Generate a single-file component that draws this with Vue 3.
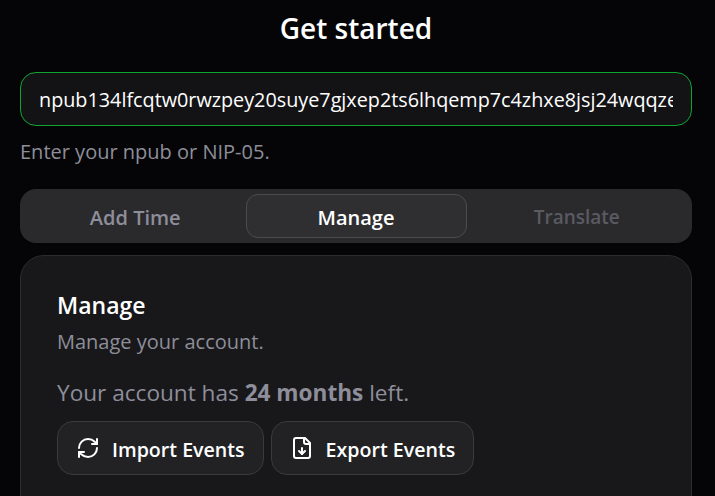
<script setup>
import { ref } from 'vue';

const pubkey = ref('npub134lfcqtw0rwzpey20suye7gjxep2ts6lhqemp7c4zhxe8jsj24wqqze');
const tabs = [
  { name: 'Add Time', state: 'idle' },
  { name: 'Manage', state: 'active' },
  { name: 'Translate', state: 'disabled' },
];
</script>

<template>
  <div class="page">
    <h1>Get started</h1>

    <input v-model="pubkey" class="npub-input" type="text">
    <p class="hint">Enter your npub or NIP-05.</p>

    <div class="tabs">
      <button v-for="tab in tabs" :key="tab.name" class="tab" :class="tab.state">{{ tab.name }}</button>
    </div>

    <div class="card">
      <h2>Manage</h2>
      <p class="desc">Manage your account.</p>
      <p class="left">Your account has <b>24 months</b> left.</p>
      <div class="actions">
        <button class="action">
          <svg viewBox="0 0 24 24" width="24" height="24" fill="none" stroke="currentColor" stroke-width="2" stroke-linecap="round" stroke-linejoin="round">
            <path d="M3 12a9 9 0 0 1 9-9 9.75 9.75 0 0 1 6.74 2.74L21 8" />
            <path d="M21 3v5h-5" />
            <path d="M21 12a9 9 0 0 1-9 9 9.75 9.75 0 0 1-6.74-2.74L3 16" />
            <path d="M8 16H3v5" />
          </svg>
          <span>Import Events</span>
        </button>
        <button class="action">
          <svg viewBox="0 0 24 24" width="24" height="24" fill="none" stroke="currentColor" stroke-width="2" stroke-linecap="round" stroke-linejoin="round">
            <path d="M15 2H6a2 2 0 0 0-2 2v16a2 2 0 0 0 2 2h12a2 2 0 0 0 2-2V7Z" />
            <path d="M14 2v4a2 2 0 0 0 2 2h4" />
            <path d="M12 18v-6" />
            <path d="m9 15 3 3 3-3" />
          </svg>
          <span>Export Events</span>
        </button>
      </div>
    </div>
  </div>
</template>

<style>
html, body {
  background: #050507;
  overflow: hidden;
}
</style>

<style scoped>
.page {
  box-sizing: border-box;
  height: 496px;
  overflow: hidden;
  padding: 0 23px 0 20px;
  font-family: "Open Sans", "Noto Sans", sans-serif;
  color: #fff;
}

h1 {
  margin: 0;
  padding-top: 8px;
  height: 72px;
  box-sizing: border-box;
  text-align: center;
  font-size: 28px;
  line-height: 40px;
  font-weight: 600;
}

.npub-input {
  display: block;
  box-sizing: border-box;
  width: 100%;
  height: 54px;
  padding: 0 18px;
  background: #131316;
  border: 1px solid #0ea52f;
  border-radius: 16px;
  outline: none;
  color: #fff;
  font-family: inherit;
  font-size: 19.8px;
}

.hint {
  margin: 12px 0 23px;
  color: #8e8e9a;
  font-size: 20px;
  line-height: 28px;
}

.tabs {
  display: grid;
  grid-template-columns: 1fr 221px 1fr;
  height: 54px;
  box-sizing: border-box;
  padding: 5px;
  background: #2a2a2d;
  border-radius: 16px;
}

.tab {
  border: 1px solid transparent;
  border-radius: 12px;
  background: none;
  font-family: inherit;
  font-size: 20px;
  font-weight: 600;
  padding: 2px 0 0;
}

.tab.idle {
  color: #8e8e9a;
}

.tab.active {
  color: #fff;
  background: #2f2f32;
  border-color: #4b4b4e;
}

.tab.disabled {
  color: #5a5a62;
  font-size: 19px;
}

.card {
  margin-top: 12px;
  height: 300px;
  box-sizing: border-box;
  padding: 34px 36px;
  background: #18181b;
  border: 1px solid #2c2c2f;
  border-radius: 24px;
}

h2 {
  margin: 0;
  font-size: 23px;
  line-height: 30px;
  font-weight: 600;
}

.desc {
  margin: 8px 0 0;
  color: #8e8e9a;
  font-size: 20px;
  line-height: 28px;
}

.left {
  margin: 22px 0 0;
  color: #8e8e9a;
  font-size: 22.6px;
  line-height: 30px;
}

.left b {
  font-weight: 700;
}

.actions {
  display: flex;
  gap: 7px;
  margin-top: 13px;
}

.action {
  display: flex;
  align-items: center;
  gap: 12px;
  height: 54px;
  box-sizing: border-box;
  padding: 0 18px;
  background: #222225;
  border: 1px solid #3a3a3d;
  border-radius: 16px;
  color: #fff;
  font-family: inherit;
  font-size: 19.6px;
  font-weight: 600;
}

.action span {
  padding-top: 2px;
}
</style>
